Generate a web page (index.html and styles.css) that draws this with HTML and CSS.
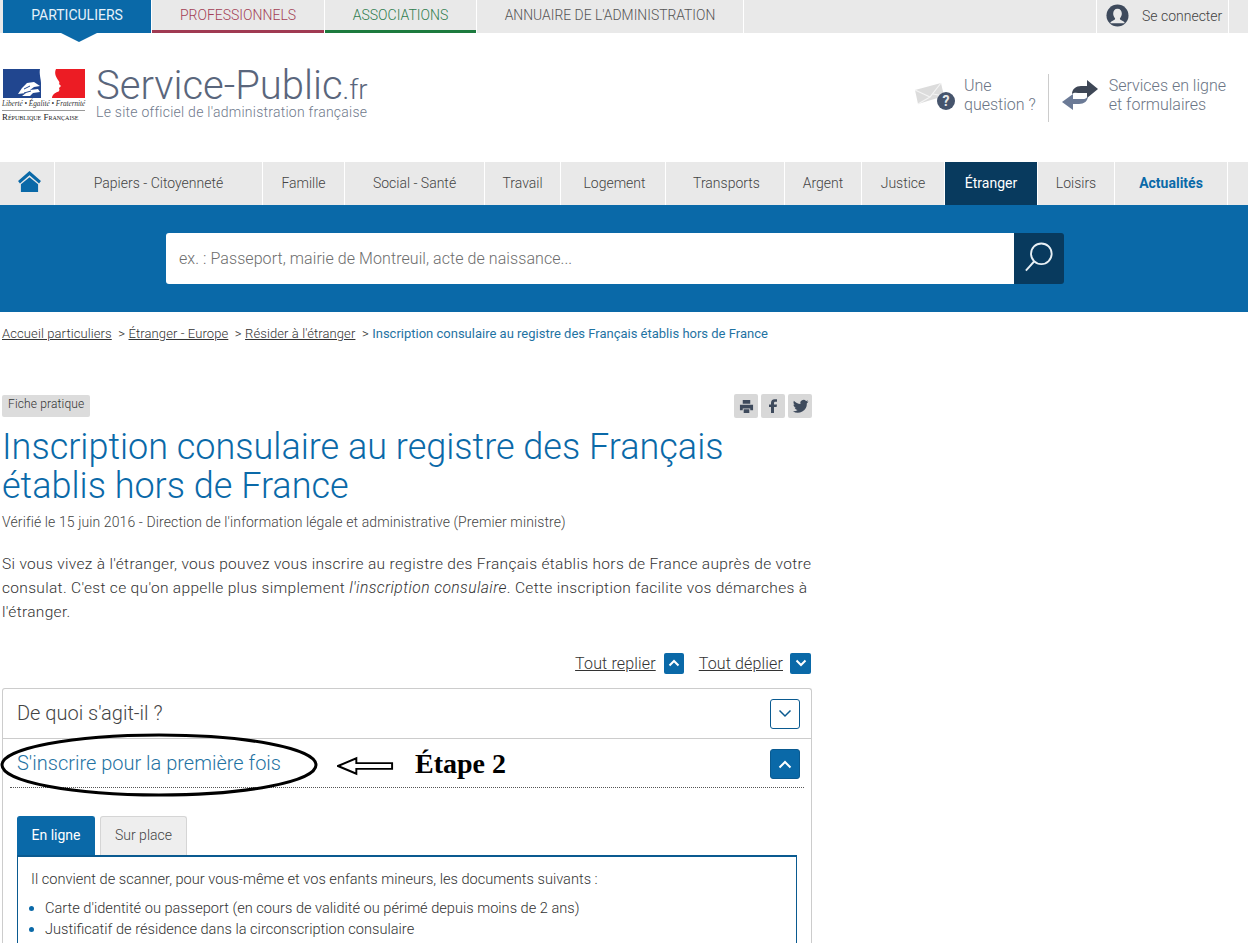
FILE: index.html
```html
<!DOCTYPE html>
<html lang="fr">
  <head>
    <meta charset="UTF-8" />
    <title>Inscription consulaire au registre des Français établis hors de France</title>
    <link rel="stylesheet" href="styles.css">
  </head>
  <body>
    <nav class="top-bar">
      <a class="top-tab tab-part">PARTICULIERS</a>
      <a class="top-tab tab-pro">PROFESSIONNELS</a>
      <a class="top-tab tab-asso">ASSOCIATIONS</a>
      <a class="top-tab tab-annu">ANNUAIRE DE L'ADMINISTRATION</a>
      <a class="login">
        <svg class="login-icon" viewBox="0 0 24 24" width="23" height="23">
          <circle cx="12" cy="12" r="11.5" fill="#3e4a5c"/>
          <path d="M12 5c3 0 4.500 2.200 4.500 5 0 2-.8 3.700-1.900 4.800-.3.900.2 1.500 1 1.900l2.800 1.600c.6.400 1 1 1.200 1.700H4.400c.2-.7.600-1.300 1.200-1.700l2.800-1.600c.8-.4 1.300-1 1-1.900C8.300 13.700 7.500 12 7.500 10c0-2.800 1.500-5 4.500-5z" fill="#e9e9e9"/>
        </svg>
        <span>Se connecter</span>
      </a>
    </nav>

    <header class="site-header">
      <div class="logo">
        <svg class="flag" viewBox="0 0 83 29" width="83" height="29">
          <path d="M1 0h37c-1 5 1 10 1 14v15H1z" fill="#21468f"/>
          <path d="M54 0h29v29H50c0-3 3-5 5-6 2 0 3-2 2-4l2-2-2-2c1-1 0-3-1-4-2-3-4-7-2-11z" fill="#ec1c24"/>
          <path d="M16 25l4-6 5-5 7-1 6 4-6 1-4 3 8-1 2 3-7 1-3 3h-8l4-3z" fill="#fff"/>
          <path d="M22 20l6-3M22 24l7-2" fill="none" stroke="#21468f" stroke-width="1"/>
        </svg>
        <div class="motto">Liberté • Égalité • Fraternité</div>
        <div class="republic">République Française</div>
      </div>
      <div class="brand">
        <div class="brand-name">Service-Public<small>.fr</small></div>
        <div class="brand-sub">Le site officiel de l'administration française</div>
      </div>
      <div class="header-links">
        <a class="header-link link-question">
          <svg viewBox="0 0 42 32" width="42" height="32">
            <path d="M1 11l26-7 3 13-26 8z" fill="#dcdcdc"/>
            <path d="M1 11l15 7 11-14M4 25l12-7M19 15l11 2" fill="none" stroke="#f4f4f4" stroke-width="1.200"/>
            <circle cx="32" cy="22" r="9" fill="#46546c"/>
            <text x="32" y="27" class="question-mark">?</text>
          </svg>
          <span>Une<br>question ?</span>
        </a>
        <a class="header-link link-services">
          <svg viewBox="0 0 38 32" width="38" height="32">
            <path d="M11 15c0-5 4-8 9-8h6V1l11 9-11 9v-5h-6c-4 0-7-1-9 1z" fill="#3e4756"/>
            <path d="M27 17c0 5-4 8-9 8h-6v6L1 23l11-8v5h6c4 0 7 1 9-3z" fill="#6b7a96"/>
          </svg>
          <span>Services en ligne<br>et formulaires</span>
        </a>
      </div>
    </header>

    <nav class="main-nav">
      <a class="nav-item nav-home">
        <svg viewBox="0 0 24 22" width="23" height="21">
          <path d="M12 0L24 10.500 22 13 12 4.500 2 13 0 10.500z" fill="#0a69a8"/>
          <path d="M3 14l9-7.500 9 7.500v8H3z" fill="#0a69a8"/>
        </svg>
      </a>
      <a class="nav-item w-papiers">Papiers - Citoyenneté</a>
      <a class="nav-item w-famille">Famille</a>
      <a class="nav-item w-social">Social - Santé</a>
      <a class="nav-item w-travail">Travail</a>
      <a class="nav-item w-logement">Logement</a>
      <a class="nav-item w-transports">Transports</a>
      <a class="nav-item w-argent">Argent</a>
      <a class="nav-item w-justice">Justice</a>
      <a class="nav-item w-etranger active">Étranger</a>
      <a class="nav-item w-loisirs">Loisirs</a>
      <a class="nav-item w-actu news">Actualités</a>
    </nav>

    <section class="search-band">
      <div class="search-box">
        <div class="search-input">ex. : Passeport, mairie de Montreuil, acte de naissance...</div>
        <button class="search-btn">
          <svg viewBox="0 0 32 34" width="30" height="33">
            <circle cx="18.500" cy="13" r="11" fill="none" stroke="#e8f0f5" stroke-width="2"/>
            <path d="M11 21L2 31" fill="none" stroke="#e8f0f5" stroke-width="2"/>
          </svg>
        </button>
      </div>
    </section>

    <div class="crumbs">
      <a>Accueil particuliers</a><span class="sep">&gt;</span><a>Étranger - Europe</a><span class="sep">&gt;</span><a>Résider à l'étranger</a><span class="sep">&gt;</span><span class="current">Inscription consulaire au registre des Français établis hors de France</span>
    </div>

    <main class="content">
      <div class="meta-row">
        <span class="badge">Fiche pratique</span>
        <div class="share">
          <a class="share-btn">
            <svg viewBox="0 0 16 16" width="15" height="15">
              <path d="M4 1h8v4H4zM1 6h14v6h-3v-2H4v2H1zM5 11h6v4H5z" fill="#3e4a5c"/>
            </svg>
          </a>
          <a class="share-btn">
            <svg viewBox="0 0 16 16" width="16" height="16">
              <path d="M6 15V9H4V6.500h2V5c0-2.500 1.300-3.800 3.500-3.800H12v2.600h-1.500C9.500 3.800 9 4.200 9 5.200v1.300h3L11.600 9H9v6z" fill="#3e4a5c"/>
            </svg>
          </a>
          <a class="share-btn">
            <svg viewBox="0 0 16 16" width="17" height="17">
              <path d="M15.500 3.300c-.5.300-1.100.4-1.700.5.600-.4 1.100-1 1.300-1.700-.6.300-1.200.6-1.900.7a3 3 0 0 0-5.200 2.800C5.500 5.500 3.300 4.300 1.800 2.500c-.8 1.400-.4 3.100.9 4-.5 0-.9-.1-1.300-.4 0 1.500 1 2.700 2.400 3-.4.100-.9.100-1.300 0 .4 1.200 1.500 2 2.800 2.100A6 6 0 0 1 .8 12.500 8.600 8.600 0 0 0 14 4.900c.6-.4 1.100-1 1.500-1.600z" fill="#3e4a5c"/>
            </svg>
          </a>
        </div>
      </div>

      <h1>Inscription consulaire au registre des Français établis hors de France</h1>
      <p class="verified">Vérifié le 15 juin 2016 - Direction de l'information légale et administrative (Premier ministre)</p>
      <p class="intro">Si vous vivez à l'étranger, vous pouvez vous inscrire au registre des Français établis hors de France auprès de votre consulat. C'est ce qu'on appelle plus simplement <em>l'inscription consulaire</em>. Cette inscription facilite vos démarches à l'étranger.</p>

      <div class="toggle-all">
        <a>Tout replier</a>
        <span class="mini-btn">
          <svg viewBox="0 0 12 8" width="12" height="8"><path d="M1.500 6.500L6 2l4.500 4.500" class="chev"/></svg>
        </span>
        <a>Tout déplier</a>
        <span class="mini-btn">
          <svg viewBox="0 0 12 8" width="12" height="8"><path d="M1.500 1.500L6 6l4.500-4.500" class="chev"/></svg>
        </span>
      </div>

      <div class="accordion">
        <div class="acc-row">
          <h2>De quoi s'agit-il ?</h2>
          <span class="acc-btn">
            <svg viewBox="0 0 14 9" width="14" height="9"><path d="M1.500 1.500L7 7l5.500-5.500" class="chev chev-dark"/></svg>
          </span>
        </div>
        <div class="acc-row acc-open">
          <h2>S'inscrire pour la première fois</h2>
          <span class="acc-btn filled">
            <svg viewBox="0 0 14 9" width="14" height="9"><path d="M1.500 7.500L7 2l5.500 5.500" class="chev"/></svg>
          </span>
        </div>
        <div class="acc-body">
          <div class="tabs">
            <a class="tab tab-on">En ligne</a>
            <a class="tab">Sur place</a>
          </div>
          <div class="tab-panel">
            <p>Il convient de scanner, pour vous-même et vos enfants mineurs, les documents suivants :</p>
            <ul>
              <li>Carte d'identité ou passeport (en cours de validité ou périmé depuis moins de 2 ans)</li>
              <li>Justificatif de résidence dans la circonscription consulaire</li>
            </ul>
          </div>
        </div>
      </div>
    </main>

    <!-- annotation drawn over the screenshot -->
    <svg class="scribble" viewBox="0 0 318 64" width="318" height="64">
      <ellipse cx="159" cy="32" rx="157" ry="30" fill="none" stroke="#000" stroke-width="3"/>
    </svg>
    <svg class="arrow" viewBox="0 0 60 20" width="58" height="20">
      <path d="M1 10L20 2v5h37v6H20v5z" fill="#fff" stroke="#000" stroke-width="2"/>
    </svg>
    <div class="step-label">Étape 2</div>
  </body>
</html>
```

FILE: styles.css
```css
html,
body {
  height: 943px;
  overflow: hidden;
}

body {
  position: relative;
  margin: 0;
  padding: 0;
  font-family: Roboto, "Liberation Sans", sans-serif;
  background-color: #fff;
  color: #3e4a5c;
}

a {
  color: inherit;
  text-decoration: none;
}

/* Top bar */
.top-bar {
  display: flex;
  height: 33px;
  padding-left: 3px;
  background-color: #e9e9e9;
}

.top-tab {
  display: flex;
  align-items: center;
  justify-content: center;
  box-sizing: border-box;
  margin-right: 1px;
  font-size: 14px;
  font-weight: 300;
  padding-bottom: 3px;
  box-shadow: 1px 0 0 #fff;
}

.tab-part {
  position: relative;
  width: 148px;
  background-color: #0a69a8;
  color: #e6f2fa;
  font-weight: 400;
  font-size: 14px;
}

.tab-part::after {
  content: "";
  position: absolute;
  left: 58px;
  top: 33px;
  border-left: 18px solid transparent;
  border-right: 18px solid transparent;
  border-top: 9px solid #0a69a8;
}

.tab-pro {
  width: 172px;
  padding-bottom: 0;
  color: #a33f55;
  border-bottom: 3px solid #a03a52;
}

.tab-asso {
  width: 151px;
  padding-bottom: 0;
  color: #2f7d4f;
  border-bottom: 3px solid #1c7a3e;
}

.tab-annu {
  width: 266px;
  font-size: 13.900px;
  color: #555;
}

.login {
  display: flex;
  align-items: center;
  box-sizing: border-box;
  width: 133px;
  margin-left: auto;
  margin-right: 19px;
  padding-left: 9px;
  padding-bottom: 2px;
  font-size: 14px;
  font-weight: 300;
  color: #444;
  border-left: 1px solid #fff;
  border-right: 1px solid #fff;
}

.login-icon {
  margin-right: 13px;
}

/* Header */
.site-header {
  display: flex;
  height: 129px;
  box-sizing: border-box;
  padding: 36px 0 0 2px;
}

.logo {
  width: 83px;
}

.flag {
  display: block;
}

.motto {
  margin-top: 2px;
  padding-bottom: 2px;
  font-family: "Liberation Serif", serif;
  font-style: italic;
  font-size: 7.200px;
  line-height: 8px;
  white-space: nowrap;
  color: #333;
  border-bottom: 1px solid #999;
}

.republic {
  margin-top: 1px;
  font-family: "Liberation Serif", serif;
  font-variant: small-caps;
  font-size: 8.900px;
  line-height: 11px;
  white-space: nowrap;
  color: #222;
}

.brand {
  margin-left: 11px;
  margin-top: -6px;
}

.brand-name {
  font-size: 40px;
  line-height: 46px;
  font-weight: 300;
  color: #5a667c;
  white-space: nowrap;
}

.brand-name small {
  font-size: 27.500px;
}

.brand-sub {
  margin-top: -10px;
  font-size: 14px;
  line-height: 18px;
  font-weight: 300;
  letter-spacing: 0.25px;
  color: #6f7a8c;
}

.header-links {
  display: flex;
  align-items: center;
  height: 48px;
  margin: 5px 22px 0 auto;
}

.header-link {
  display: flex;
  align-items: center;
  box-sizing: border-box;
  height: 48px;
  padding-bottom: 6px;
  font-size: 16px;
  line-height: 19px;
  font-weight: 300;
  color: #6b7585;
}

.link-question svg {
  margin-right: 8px;
}

.link-question {
  padding-right: 12px;
  border-right: 1px solid #ccc;
}

.link-services {
  margin-left: 12px;
}

.link-services svg {
  margin-right: 10px;
}

.question-mark {
  font-size: 14px;
  font-weight: 700;
  fill: #e9e9e9;
  text-anchor: middle;
}

/* Main nav */
.main-nav {
  display: flex;
  height: 43px;
  padding-left: 3px;
  background-color: #e9e9e9;
}

.nav-item {
  display: flex;
  align-items: center;
  justify-content: center;
  box-sizing: border-box;
  padding-bottom: 1px;
  border-right: 1px solid #fff;
  font-size: 14px;
  font-weight: 300;
  color: #444;
}

.nav-home {
  width: 52px;
  padding-bottom: 4px;
  padding-left: 2px;
}

.w-papiers { width: 208px; }
.w-famille { width: 82px; }
.w-social { width: 140px; }
.w-travail { width: 76px; }
.w-logement { width: 105px; padding-left: 3px; }
.w-transports { width: 119px; padding-left: 3px; }
.w-argent { width: 77px; }
.w-justice { width: 83px; }
.w-etranger { width: 93px; }
.w-loisirs { width: 77px; }
.w-actu { width: 113px; }

.nav-item.active {
  background-color: #083a5e;
  color: #fff;
  font-weight: 400;
}

.nav-item.news {
  color: #0a69a8;
  font-weight: 700;
}

/* Search */
.search-band {
  height: 107px;
  box-sizing: border-box;
  padding: 28px 0 0 166px;
  background-color: #0a69a8;
}

.search-box {
  display: flex;
  width: 898px;
  height: 51px;
}

.search-input {
  flex: 1;
  display: flex;
  align-items: center;
  padding-left: 13px;
  box-sizing: border-box;
  background-color: #fff;
  border-radius: 3px 0 0 3px;
  font-size: 16px;
  letter-spacing: 0.07px;
  font-weight: 300;
  color: #6d6d6d;
}

.search-btn {
  width: 50px;
  padding: 0;
  border: none;
  background-color: #083a5e;
  border-radius: 0 3px 3px 0;
}

/* Breadcrumbs */
.crumbs {
  padding: 15px 0 0 2px;
  height: 23px;
  font-size: 13px;
  line-height: 14px;
  font-weight: 300;
  color: #333;
}

.crumbs a {
  letter-spacing: 0.1px;
  text-decoration: underline;
}

.crumbs .sep {
  margin: 0 3.500px 0 6.500px;
}

.crumbs .current {
  color: #1f73a3;
  font-weight: 400;
}

/* Content */
.content {
  width: 810px;
  margin-left: 2px;
  padding-top: 44px;
}

.meta-row {
  display: flex;
  justify-content: space-between;
  align-items: center;
  height: 24px;
}

.badge {
  padding: 0 6px;
  height: 22px;
  line-height: 19px;
  background-color: #dcdcdc;
  border-radius: 2px;
  font-size: 12px;
  letter-spacing: 0.15px;
  font-weight: 300;
  color: #333;
}

.share {
  display: flex;
  gap: 3px;
}

.share-btn {
  display: flex;
  align-items: center;
  justify-content: center;
  width: 24px;
  height: 24px;
  background-color: #d8d8d8;
  border-radius: 2px;
}

h1 {
  margin: 10px 0 0;
  font-size: 36px;
  line-height: 39px;
  font-weight: 300;
  color: #0a69a8;
}

.verified {
  margin: 7px 0 0;
  font-size: 14px;
  letter-spacing: 0.11px;
  line-height: 18px;
  font-weight: 300;
  color: #444;
}

.intro {
  margin: 21px 0 0;
  font-size: 15.500px;
  letter-spacing: 0.32px;
  line-height: 24px;
  font-weight: 300;
  color: #333;
}

.intro em {
  font-size: 15.700px;
  letter-spacing: 0.4px;
}

.toggle-all {
  display: flex;
  justify-content: flex-end;
  align-items: center;
  height: 22px;
  margin-top: 28px;
  margin-right: 1px;
  font-size: 16px;
  letter-spacing: 0.15px;
  font-weight: 300;
  color: #333;
}

.toggle-all a {
  text-decoration: underline;
}

.mini-btn {
  display: flex;
  align-items: center;
  justify-content: center;
  width: 20px;
  height: 21px;
  margin: 0 15px 0 8px;
  background-color: #0a69a8;
  border-radius: 2px;
}

.mini-btn:last-child {
  width: 21px;
  margin-right: 0;
  margin-left: 7px;
}

.chev {
  fill: none;
  stroke: #fff;
  stroke-width: 2;
}

.chev-dark {
  stroke: #0a5a90;
  stroke-width: 1.500;
}

/* Accordion, cut off by the bottom of the window */
.accordion {
  box-sizing: border-box;
  margin-top: 14px;
  height: 255px;
  overflow: hidden;
  border: 1px solid #ccc;
  border-bottom: none;
  border-radius: 3px 3px 0 0;
}

.acc-row {
  display: flex;
  justify-content: space-between;
  align-items: center;
  height: 50px;
  box-sizing: border-box;
  padding: 0 11px 0 14px;
  border-bottom: 1px solid #ccc;
}

.acc-row h2 {
  margin: -2px 0 0;
  font-size: 20px;
  font-weight: 300;
  color: #444;
}

.acc-open {
  height: 49px;
  margin: 0 7px;
  padding: 0 4px 0 7px;
  border-bottom: 1px dotted #555;
}

.acc-open .acc-btn {
  margin-top: 2px;
}

.acc-row.acc-open h2 {
  margin-top: 0;
  color: #1f73a3;
}

.acc-btn {
  display: flex;
  align-items: center;
  justify-content: center;
  box-sizing: border-box;
  width: 30px;
  height: 30px;
  border: 1px solid #0a5a90;
  border-radius: 3px;
}

.acc-btn.filled {
  background-color: #0a69a8;
}

.acc-body {
  padding: 28px 14px 0;
}

.tabs {
  display: flex;
  gap: 5px;
  height: 39px;
}

.tab {
  display: flex;
  align-items: center;
  justify-content: center;
  box-sizing: border-box;
  width: 87px;
  padding-bottom: 2px;
  background-color: #eee;
  border: 1px solid #d5d5d5;
  border-bottom: none;
  border-radius: 3px 3px 0 0;
  font-size: 14px;
  font-weight: 300;
  color: #444;
}

.tab-on {
  width: 78px;
  background-color: #0a69a8;
  border-color: #0a69a8;
  color: #fff;
  font-weight: 400;
}

.tab-panel {
  box-sizing: border-box;
  height: 88px;
  padding: 13px 13px 0;
  border: 1px solid #0a5a90;
  border-top-width: 2px;
  border-bottom: none;
  font-size: 14.600px;
  font-weight: 300;
  color: #333;
}

.tab-panel p {
  margin: 0 0 10px;
  line-height: 18px;
}

.tab-panel ul {
  margin: 0;
  padding: 0 0 0 14px;
  line-height: 21px;
}

.tab-panel li::marker {
  color: #0a69a8;
}

/* Annotation */
.scribble {
  position: absolute;
  left: 0;
  top: 733px;
}

.arrow {
  position: absolute;
  left: 337px;
  top: 756px;
}

.step-label {
  position: absolute;
  left: 415px;
  top: 748px;
  font-family: "Liberation Serif", serif;
  font-weight: 700;
  font-size: 28px;
  line-height: 32px;
  color: #000;
}
```
